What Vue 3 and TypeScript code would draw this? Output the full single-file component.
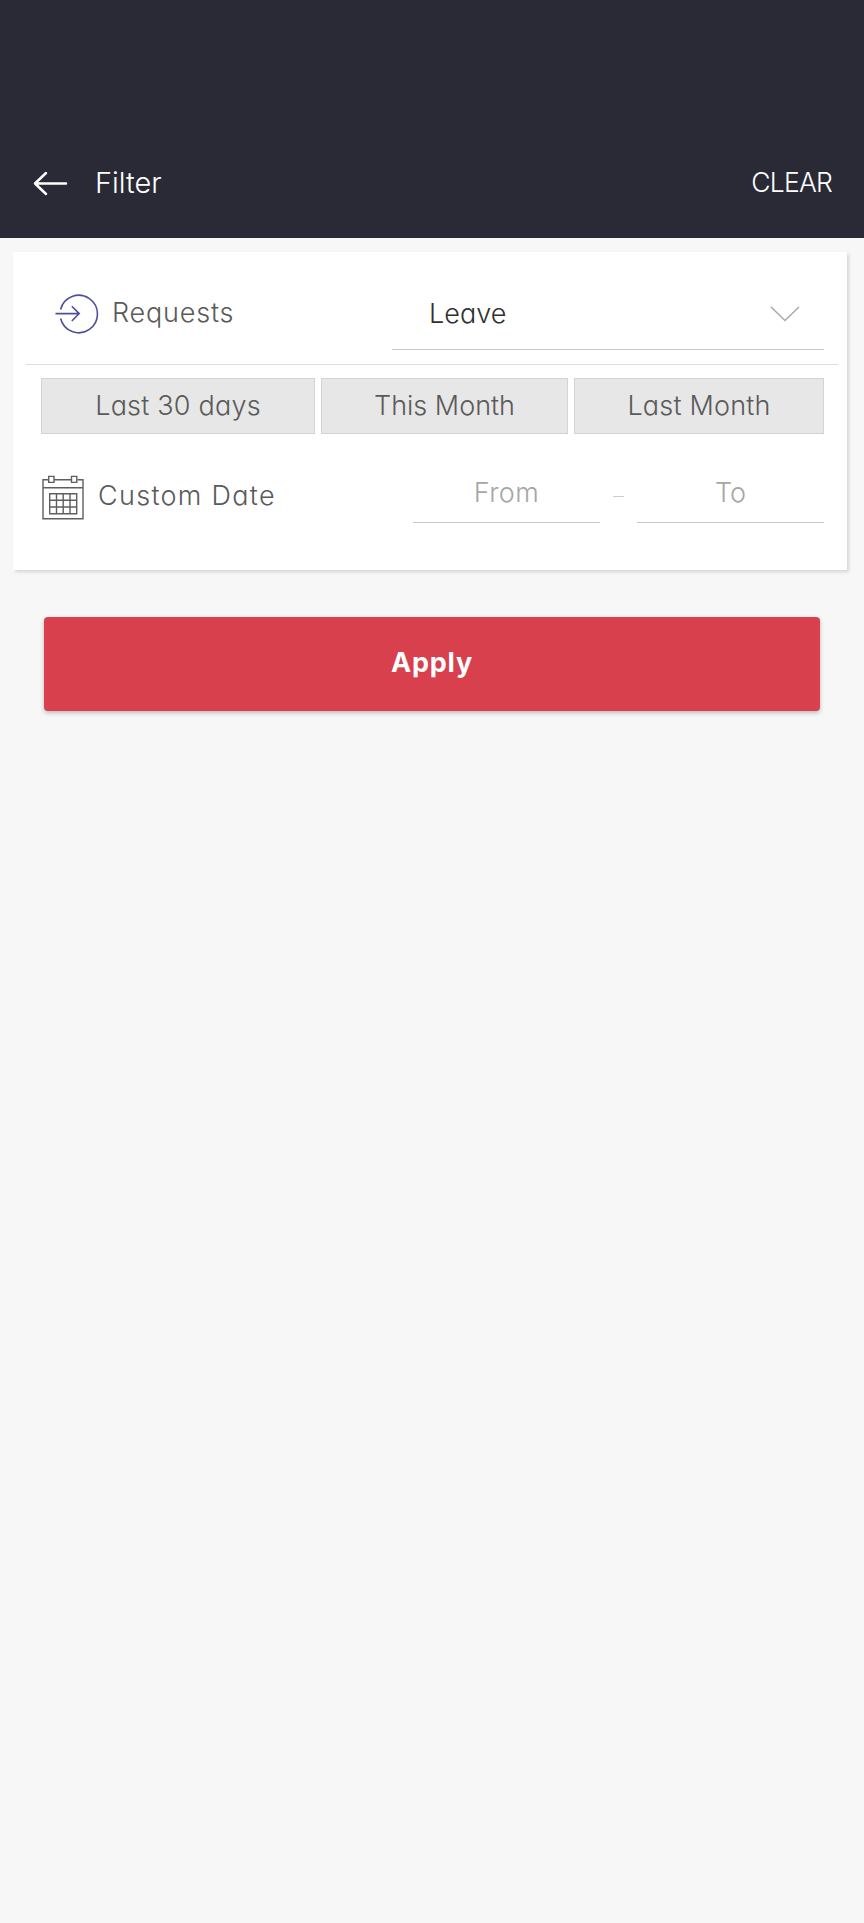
<script setup lang="ts">
import { ref } from 'vue'

interface Period {
  id: string
  label: string
}

const periods: Period[] = [
  { id: 'days', label: 'Last 30 days' },
  { id: 'current', label: 'This Month' },
  { id: 'previous', label: 'Last Month' },
]
const requestType = ref('Leave')
</script>

<template>
  <div class="screen">
    <header class="bar">
      <svg class="back" width="36" height="28" viewBox="0 0 36 28" fill="none">
        <path d="M13 3 2 13.500l11 10.500M2 13.500h31" stroke="#fff" stroke-width="2.500" stroke-linecap="round" stroke-linejoin="round" />
      </svg>
      <h1 class="title"><span>Filter</span></h1>
      <button class="clear"><span>CLEAR</span></button>
    </header>

    <section class="card">
      <div class="row request">
        <svg class="enter" width="44" height="42" viewBox="0 0 44 42" fill="none" stroke="#514f9b" stroke-width="1.6">
          <path d="M5.6 16.5a18.7 18.7 0 1 1 0 9M.5 20.6h23M16.800 13.200l7.400 7.400-7.400 7.400" />
        </svg>
        <span class="label requests">Requests</span>
        <div class="select">
          <span class="value">{{ requestType }}</span>
          <svg width="30" height="18" viewBox="0 0 30 18" fill="none">
            <path d="m1 2 14 13.500L29 2" stroke="#aaa" stroke-width="1.600" />
          </svg>
        </div>
      </div>

      <div class="periods">
        <button v-for="p in periods" :key="p.id" class="period" :class="p.id"><span>{{ p.label }}</span></button>
      </div>

      <div class="row custom">
        <svg class="calendar" width="42" height="46" viewBox="0 0 42 46" fill="none" stroke="#5f5f5f" stroke-width="1.400">
          <path d="M6.500 4.700H1v39h40v-39h-5.500M12 4.700h17.500M1 12.700h40" />
          <path d="M6.700 1.400h5.300v6H6.700zM29.500 1.400h5.300v6h-5.300z" />
          <path d="M7.700 18.700h27v20h-27zM14.500 18.700v20M21.200 18.700v20M28 18.700v20M7.700 25.300h27M7.700 32h27" />
        </svg>
        <span class="label date">Custom Date</span>
        <div class="field from"><span>From</span></div>
        <i class="dash"></i>
        <div class="field to"><span>To</span></div>
      </div>
    </section>

    <button class="apply"><span>Apply</span></button>
  </div>
</template>

<style>
body {
  background: #f7f7f7;
}
</style>

<style scoped>
.screen {
  box-sizing: border-box;
  width: 864px;
  min-height: 1923px;
  background: #f7f7f7;
  font-family: Inter, "Open Sans", sans-serif;
  font-feature-settings: "cv11", "ss03";
  font-size: 27px;
  font-weight: 300;
  line-height: 40px;
  color: #5a5a5a;
  white-space: nowrap;
}
button {
  margin: 0;
  padding: 0;
  border: 0;
  background: none;
  color: inherit;
  font: inherit;
  font-feature-settings: inherit;
}
.bar {
  box-sizing: border-box;
  display: flex;
  align-items: flex-start;
  height: 238px;
  padding: 162px 32px 0 33px;
  background: #292a35;
  color: #fff;
}
.back {
  margin-top: 8px;
}
.title {
  margin: 1px 0 0 26px;
  font-size: 29px;
  font-weight: 300;
}
.clear {
  margin-left: auto;
  font-size: 26.5px;
  letter-spacing: -0.8px;
}
.card {
  box-sizing: border-box;
  width: 834px;
  height: 318px;
  margin: 14px 0 0 13px;
  padding: 0 9px 0 13px;
  background: #fff;
  box-shadow: 2px 2px 3px #d6d6d6;
}
.row {
  display: flex;
  align-items: flex-start;
}
.request {
  height: 112px;
  border-bottom: 1px solid #ddd;
}
.enter {
  margin: 41px 0 0 29px;
}
.label {
  display: block;
}
.requests {
  width: 280px;
  margin: 41px 0 0 13px;
  letter-spacing: 0.8px;
}
.select {
  box-sizing: border-box;
  display: flex;
  align-items: center;
  justify-content: space-between;
  width: 432px;
  height: 57px;
  margin-top: 41px;
  padding: 0 24px 14px 37px;
  border-bottom: 1px solid #c8c8c8;
  color: #303030;
}
.periods {
  display: grid;
  grid-template-columns: 274px 247px 250px;
  column-gap: 6px;
  margin: 13px 0 0 15px;
}
.period {
  box-sizing: border-box;
  height: 56px;
  padding-bottom: 1px;
  border: 1px solid #d4d4d4;
  background: #e7e7e7;
  letter-spacing: 0.2px;
}
.current {
  letter-spacing: 0;
}
.calendar {
  margin: 41px 0 0 16px;
}
.date {
  width: 315px;
  margin: 42px 0 0 14px;
  letter-spacing: 1.300px;
}
.field {
  box-sizing: border-box;
  width: 187px;
  height: 51px;
  margin-top: 38px;
  padding-top: 1px;
  border-bottom: 1px solid #c8c8c8;
  color: #a6a6a6;
  text-align: center;
}
.from {
  letter-spacing: 0.4px;
}
.dash {
  width: 11px;
  height: 1px;
  margin: 62px 13px 0;
  background: #ccc;
}
.apply {
  display: block;
  width: 776px;
  height: 94px;
  margin: 47px 0 0 44px;
  padding-bottom: 3px;
  border-radius: 4px;
  background: #d7404c;
  box-shadow: 0 2px 4px #bbb;
  color: #fff;
  font-weight: 700;
  letter-spacing: 0.8px;
}
</style>
